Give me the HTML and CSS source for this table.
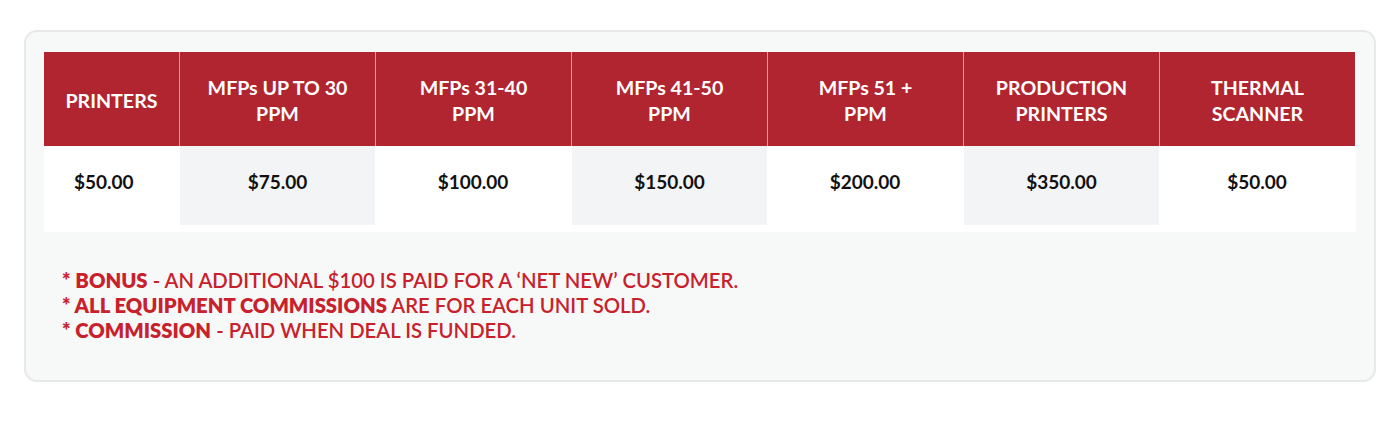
FILE: index.html
```html
<!DOCTYPE html>
<html lang="en">
<head>
<meta charset="utf-8">
<title>Commissions</title>
<link rel="stylesheet" href="styles.css">
</head>
<body>
<div class="panel">
  <div class="table">
    <div class="th first">PRINTERS</div>
    <div class="th">MFPs UP TO 30<br>PPM</div>
    <div class="th">MFPs 31-40<br>PPM</div>
    <div class="th">MFPs 41-50<br>PPM</div>
    <div class="th">MFPs 51 +<br>PPM</div>
    <div class="th">PRODUCTION<br>PRINTERS</div>
    <div class="th">THERMAL<br>SCANNER</div>
    <div class="td first">$50.00</div>
    <div class="td alt">$75.00</div>
    <div class="td">$100.00</div>
    <div class="td alt">$150.00</div>
    <div class="td">$200.00</div>
    <div class="td alt">$350.00</div>
    <div class="td">$50.00</div>
  </div>
  <div class="notes">
    <p><b>* BONUS</b> - AN ADDITIONAL $100 IS PAID FOR A ‘NET NEW’ CUSTOMER.</p>
    <p><b>* ALL EQUIPMENT COMMISSIONS</b> ARE FOR EACH UNIT SOLD.</p>
    <p><b>* COMMISSION</b> - PAID WHEN DEAL IS FUNDED.</p>
  </div>
</div>
</body>
</html>
```
FILE: styles.css
```css
html, body {
  margin: 0;
  padding: 0;
  background: #ffffff;
}
body {
  padding: 30px 23px 0 24px;
  font-family: Lato, "Source Sans Pro", "Liberation Sans", sans-serif;
}
.panel {
  width: 1352px;
  height: 352px;
  box-sizing: border-box;
  background: #f7f8f8;
  border: 2px solid #e7e9e9;
  border-radius: 13px;
  padding: 20px 18px 0 18px;
}
.table {
  display: grid;
  grid-template-columns: 135px repeat(6, 196px);
  grid-template-rows: 94px 79px;
  background: #ffffff;
  padding-bottom: 7px;
  width: 1312px;
}
.th {
  background: #b0252f;
  color: #ffffff;
  font-weight: 700;
  font-size: 19.6px;
  line-height: 26px;
  text-align: center;
  display: flex;
  align-items: center;
  justify-content: center;
  padding-top: 3px;
  border-left: 1px solid #e39ea3;
}
.th.first {
  border-left: none;
}
.td {
  display: flex;
  align-items: center;
  justify-content: center;
  padding-bottom: 9px;
  font-size: 19px;
  font-weight: 700;
  color: #111111;
}
.td.first {
  justify-content: flex-start;
  padding-left: 30px;
}
.td.alt {
  background: #f3f4f5;
  margin-left: 1px;
}
.notes {
  margin-top: 36px;
  padding-left: 18px;
  color: #c8212b;
  font-size: 20.3px;
  font-weight: 600;
  line-height: 25px;
}
.notes p {
  margin: 0;
}
.notes b {
  font-weight: 800;
}
```
